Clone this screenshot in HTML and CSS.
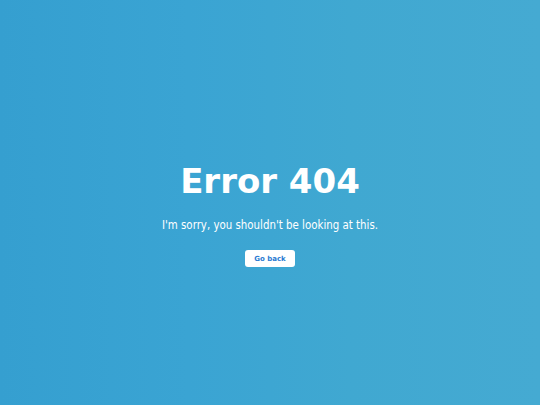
FILE: index.html
```html
<!DOCTYPE html>
<html>
<head>
<meta charset="utf-8">
<link rel="stylesheet" href="styles.css">
</head>
<body>
<main class="page">
  <h1 class="title">Error 404</h1>
  <p class="message">I'm sorry, you shouldn't be looking at this.</p>
  <a class="back" href="#">Go back</a>
</main>
</body>
</html>
```
FILE: styles.css
```css
html, body {
  margin: 0;
  padding: 0;
  height: 100%;
}
body {
  background: linear-gradient(90deg, #359fd0 0%, #3aa4d3 35%, #40a8d1 65%, #45aad2 100%);
  font-family: "DejaVu Sans", Verdana, sans-serif;
  color: #fff;
}
.page {
  box-sizing: border-box;
  height: 100%;
  display: flex;
  flex-direction: column;
  align-items: center;
  padding-top: 161px;
}
.title {
  margin: 0;
  font-size: 34px;
  font-weight: bold;
  line-height: 40px;
}
.message {
  margin: 16px 0 0;
  font-family: "DejaVu Sans Condensed", "DejaVu Sans", sans-serif;
  font-stretch: condensed;
  font-size: 11.4px;
  line-height: 16px;
}
.back {
  margin-top: 17px;
  display: flex;
  align-items: center;
  justify-content: center;
  width: 50px;
  height: 17px;
  background: #fff;
  border-radius: 3px;
  color: #2a7ad2;
  font-size: 7px;
  font-weight: bold;
  text-decoration: none;
}
```
